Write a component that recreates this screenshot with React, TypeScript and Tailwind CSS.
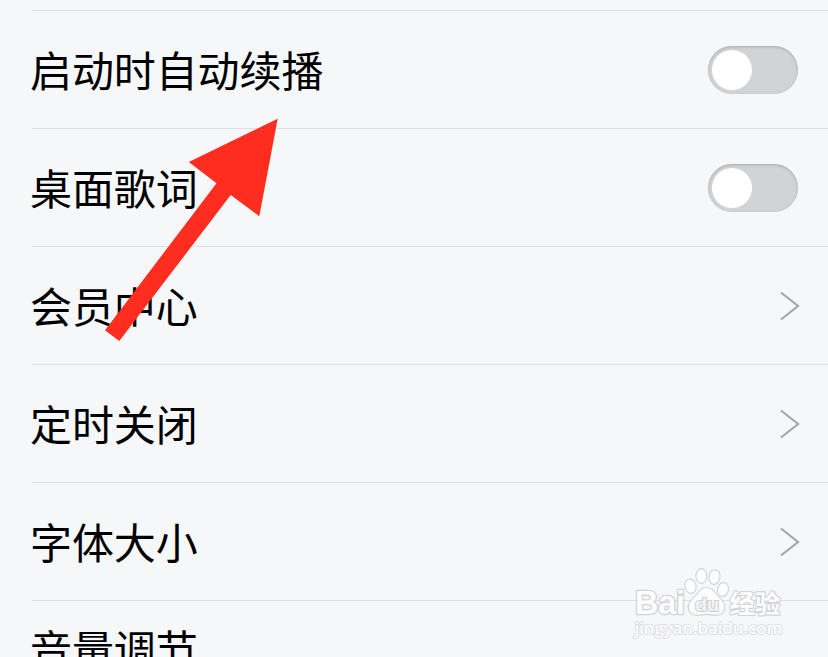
type Item = { label: string; kind: "switch" | "link" };

const ITEMS: Item[] = [
  { label: "启动时自动续播", kind: "switch" },
  { label: "桌面歌词", kind: "switch" },
  { label: "会员中心", kind: "link" },
  { label: "定时关闭", kind: "link" },
  { label: "字体大小", kind: "link" },
];

function Toggle() {
  return (
    <button
      role="switch"
      aria-checked={false}
      className="mr-[30px] flex h-12 w-[90px] items-center rounded-full bg-[#d2d3d5] pl-1 shadow-[inset_0_1px_3px_#a9aaac]"
    >
      <span className="h-10 w-10 rounded-full bg-white" />
    </button>
  );
}

function Chevron() {
  return (
    <svg className="mr-7 h-[30px] w-5" viewBox="0 0 20 30" fill="none" stroke="#a6a7a9" strokeWidth="2.2">
      <path d="M1 1.5 18 15 1 28.5" />
    </svg>
  );
}

function Row({ label, kind }: Item) {
  return (
    <div className="flex h-[118px] items-center justify-between border-t border-[#dddfe2]">
      <span className="-ml-0.5 pb-px">{label}</span>
      {kind === "switch" ? <Toggle /> : <Chevron />}
    </div>
  );
}

// Red pointer laid over the list
function Arrow() {
  return (
    <svg className="absolute top-[118px] left-[104px] h-[224px] w-[175px]" viewBox="104 118 175 224">
      <path fill="#ff2d1f" d="M277.7 118.8 259.3 216.2 230.7 195 119.3 341 105 330.2 216.5 183.3 188.8 162Z" />
    </svg>
  );
}

function Watermark() {
  return (
    <svg
      className="absolute top-[560px] left-[620px] h-[97px] w-[208px]"
      viewBox="620 560 208 97"
      fill="#fdfdfe"
      stroke="#d2d3d5"
      strokeLinejoin="round"
    >
      <g paintOrder="stroke">
        <text
          x="635"
          y="613.5"
          fontFamily="'Liberation Sans', sans-serif"
          fontSize="32.5"
          fontWeight="700"
          strokeWidth="2.6"
          textLength="50"
          lengthAdjust="spacingAndGlyphs"
        >
          Bai
        </text>
        <text
          x="634.5"
          y="634"
          fontFamily="'Open Sans', sans-serif"
          fontSize="17"
          fontWeight="600"
          stroke="#d9dadc"
          strokeWidth="1.6"
          textLength="148"
          lengthAdjust="spacingAndGlyphs"
        >
          jingyan.baidu.com
        </text>
      </g>
      <g strokeWidth="1.2">
        <ellipse cx="690.5" cy="586.3" rx="5.6" ry="7.2" transform="rotate(-12 690.5 586.3)" />
        <ellipse cx="701.3" cy="576" rx="5.4" ry="7.4" />
        <ellipse cx="714.5" cy="577" rx="5.5" ry="7.4" transform="rotate(12 714.5 577)" />
        <ellipse cx="723" cy="589.5" rx="5.4" ry="7" transform="rotate(14 723 589.5)" />
        <path d="M706.5 587.5c-4.5 0-7 2.6-9.3 6-2.8 4.2-9 7.2-9 13.3 0 5.4 4 8.7 9.3 8.6 3.5 0 5.5-1 9.2-1s5.7 1 9 1c5.3 0 9.2-3.2 9.2-8.5 0-6-6.2-9.2-9-13.4-2.3-3.4-4.9-6-9.4-6Z" />
      </g>
      <text
        x="695"
        y="611"
        fill="#f3f4f5"
        stroke="#cccdcf"
        strokeWidth="2"
        paintOrder="stroke"
        fontSize="19"
        fontWeight="700"
        fontFamily="'Liberation Sans', sans-serif"
        textLength="24"
        lengthAdjust="spacingAndGlyphs"
      >
        du
      </text>
      <text
        x="729.5"
        y="612.5"
        fontSize="25.5"
        fontWeight="700"
        fontFamily="'Noto Sans CJK SC', sans-serif"
        strokeWidth="2.2"
        paintOrder="stroke"
      >
        经验
      </text>
    </svg>
  );
}

export default function App() {
  return (
    <div className="relative h-[657px] w-[828px] overflow-hidden bg-[#f5f7f9] pt-2.5 pl-8 font-['Noto_Sans_CJK_SC',sans-serif] text-[42px] leading-none tracking-[-0.1px] text-black">
      {ITEMS.map((item) => (
        <Row key={item.label} {...item} />
      ))}
      <div className="border-t border-[#dddfe2] pt-[26px]">
        <span className="-ml-0.5">音量调节</span>
      </div>
      <Arrow />
      <Watermark />
    </div>
  );
}
